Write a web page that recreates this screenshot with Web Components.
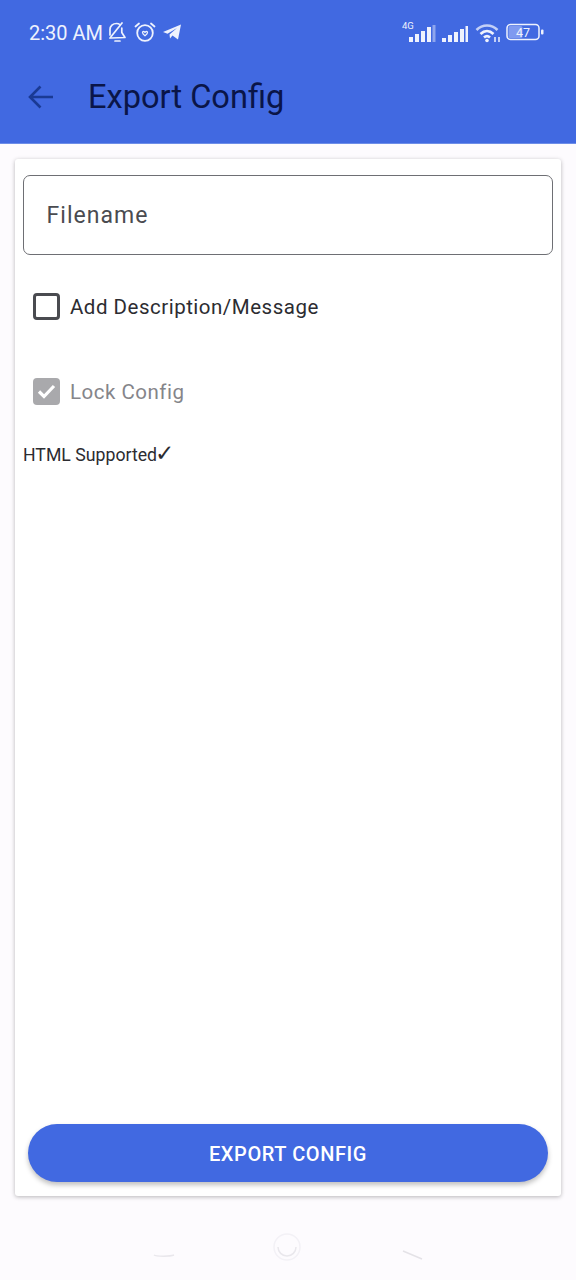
<!DOCTYPE html>
<html>
<head>
<meta charset="utf-8">
<title>Export Config</title>
<style>
	html, body {
		margin: 0;
		height: 1280px;
		overflow: hidden;
	}
	body {
		display: flex;
		flex-direction: column;
		background: #fdfbfe;
		font-family: Roboto, "Liberation Sans", sans-serif;
	}
</style>
</head>
<body>
<app-header title-text="Export Config"></app-header>
<form-card>
	<outlined-field label="Filename"></outlined-field>
	<check-row label="Add Description/Message" style="margin-top:9px"></check-row>
	<check-row label="Lock Config" checked disabled></check-row>
	<div slot="note" style="font-size:17.7px;color:#2c2c31;height:28px;line-height:28px;margin-top:7px;white-space:nowrap;">HTML Supported<span style="font-family:'DejaVu Sans',sans-serif;font-size:23px;line-height:20px;margin-left:-2px;">✓</span></div>
	<pill-button slot="action">EXPORT CONFIG</pill-button>
</form-card>
<nav-bar></nav-bar>
<script>
class AppHeader extends HTMLElement {
	connectedCallback() {
		let shadow = this.attachShadow({mode: "open"});
		shadow.innerHTML = `
			<style>
				:host {
					display: block;
					background: #4169e1;
					border-bottom: 1px solid #6d8de8;
					height: 143px;
					box-sizing: content-box;
				}
				#status {
					height: 64px;
					display: flex;
					align-items: center;
					justify-content: space-between;
					padding: 0 32px 0 29px;
					color: #eef2fd;
				}
				#left, #right {
					display: flex;
					align-items: center;
				}
				#time {
					font-size: 20px;
					margin-right: 3px;
					padding-top: 1px;
				}
				#toolbar {
					height: 66px;
					display: flex;
					align-items: center;
					padding-left: 28px;
				}
				h1 {
					margin: 0 0 0 34px;
					font-weight: 400;
					font-size: 32.6px;
					color: #0a1548;
				}
				svg {
					display: block;
				}
			</style>
			<div id="status">
				<div id="left">
					<span id="time">2:30 AM</span>
					<svg width="22" height="22" viewBox="0 0 22 22" fill="none" stroke="#eef2fd" stroke-width="1.7" stroke-linecap="round" stroke-linejoin="round">
						<path d="M4 14V8.500C4 5 7 2.500 10.500 2.500C12 2.500 13.200 3 14.200 3.800M15.800 7V11.500L19 16.500L5 17"/>
						<path d="M9 20H14"/>
						<path d="M4 17L16 2"/>
					</svg>
					<svg style="margin-left:6px" width="22" height="22" viewBox="0 0 22 22" fill="none" stroke="#eef2fd" stroke-width="1.8" stroke-linecap="round" stroke-linejoin="round">
						<circle cx="11" cy="12" r="7.800"/>
						<path d="M1.500 5.500L5 2.500M20.500 5.500L17 2.500"/>
						<path d="M8.500 11.500C8.500 10 10.500 10 11 11.500C11.500 10 13.500 10 13.500 11.500C13.500 12.800 12 14 11 14.800C10 14 8.500 12.800 8.500 11.500Z" stroke-width="1.300"/>
					</svg>
					<svg style="margin-left:6px" width="20" height="18" viewBox="0 0 20 18">
						<path d="M1 9L19 1.500L16 16.500L10.500 12.500L8 15.500L7.500 11.500L15 5L5.500 10.800Z" fill="#eef2fd"/>
					</svg>
				</div>
				<div id="right">
					<svg width="34" height="24" viewBox="0 0 34 24" fill="#eef2fd">
						<text x="0" y="9" font-family="Roboto, sans-serif" font-size="9.500">4G</text>
						<rect x="7" y="17" width="4" height="5"/>
						<rect x="13" y="14" width="4" height="8"/>
						<rect x="19" y="11" width="4" height="11"/>
						<rect x="25" y="7" width="4" height="15"/>
						<rect x="30.500" y="5" width="3" height="17" opacity=".45"/>
					</svg>
					<svg style="margin-left:5px" width="27" height="24" viewBox="0 0 27 24" fill="#eef2fd">
						<rect x="1" y="18" width="4" height="4"/>
						<rect x="7" y="15" width="4" height="7"/>
						<rect x="13" y="12" width="4" height="10"/>
						<rect x="19" y="9" width="4" height="13"/>
						<rect x="24.500" y="6" width="2.500" height="16"/>
					</svg>
					<svg style="margin-left:7px" width="26" height="24" viewBox="0 0 26 24" fill="none" stroke="#eef2fd" stroke-width="2.600">
						<path d="M1.500 10C7.500 4 16.500 4 22.500 10" opacity=".75"/>
						<path d="M5.500 14C9.500 10 14.500 10 18.500 14"/>
						<path d="M9 17.500C10.800 15.800 13.200 15.800 15 17.500"/>
						<circle cx="12" cy="20.500" r="1.800" fill="#eef2fd" stroke="none"/>
						<path d="M20 22V17M24 22V17" stroke-width="1.500"/>
					</svg>
					<svg style="margin-left:5px" width="38" height="18" viewBox="0 0 38 18">
						<rect x="1" y="1.500" width="32" height="15" rx="3.500" fill="none" stroke="#eef2fd" stroke-width="1.500"/>
						<rect x="2.500" y="3" width="14" height="12" rx="1.500" fill="#7f9af0"/>
						<text x="17" y="13.500" text-anchor="middle" font-family="Roboto, sans-serif" font-size="12.500" fill="#eef2fd">47</text>
						<rect x="35" y="6.500" width="2.500" height="5" rx="1" fill="#eef2fd"/>
					</svg>
				</div>
			</div>
			<div id="toolbar">
				<svg width="26" height="26" viewBox="0 0 26 26" fill="none" stroke="#1a3a94" stroke-width="2.600">
					<path d="M25 13H2.500M12.500 2.500L2 13L12.500 23.500"/>
				</svg>
				<h1></h1>
			</div>
		`;
		shadow.querySelector("h1").textContent = this.getAttribute("title-text");
	}
}
customElements.define("app-header", AppHeader);

class FormCard extends HTMLElement {
	connectedCallback() {
		let shadow = this.attachShadow({mode: "open"});
		shadow.innerHTML = `
			<style>
				:host {
					display: flex;
					flex-direction: column;
					box-sizing: border-box;
					height: 1037px;
					margin: 15px 15px 0 15px;
					padding: 16px 8px 14px 8px;
					background: #fff;
					border-radius: 3px;
					box-shadow: 0 1px 4px rgba(0, 0, 0, 0.28);
				}
				#fields {
					flex: 1;
				}
				#action {
					padding: 0 5px;
				}
			</style>
			<div id="fields">
				<slot></slot>
				<slot name="note"></slot>
			</div>
			<div id="action"><slot name="action"></slot></div>
		`;
	}
}
customElements.define("form-card", FormCard);

class OutlinedField extends HTMLElement {
	connectedCallback() {
		let shadow = this.attachShadow({mode: "open"});
		shadow.innerHTML = `
			<style>
				:host {
					display: flex;
					align-items: center;
					box-sizing: border-box;
					height: 80px;
					padding-left: 22.500px;
					border: 1.500px solid #6e6f74;
					border-radius: 7px;
					font-size: 23px;
					letter-spacing: 1.05px;
					color: #4a4b50;
				}
			</style>
			<span></span>
		`;
		shadow.querySelector("span").textContent = this.getAttribute("label");
	}
}
customElements.define("outlined-field", OutlinedField);

class CheckRow extends HTMLElement {
	connectedCallback() {
		let shadow = this.attachShadow({mode: "open"});
		shadow.innerHTML = `
			<style>
				:host {
					display: flex;
					align-items: center;
					height: 85px;
					padding-left: 10px;
					font-size: 20.500px;
					letter-spacing: 0.5px;
					color: #2c2c31;
				}
				:host([disabled]) {
					color: #85858a;
				}
				#box {
					box-sizing: border-box;
					width: 27px;
					height: 27px;
					margin-right: 10px;
					border: 3px solid #4a4b50;
					border-radius: 4px;
					display: flex;
					align-items: center;
					justify-content: center;
				}
				:host([checked]) #box {
					border: 0;
					background: #a9a9ac;
				}
				svg {
					display: none;
				}
				:host([checked]) svg {
					display: block;
				}
			</style>
			<div id="box">
				<svg width="19" height="15" viewBox="0 0 19 15" fill="none" stroke="#fff" stroke-width="3.200">
					<path d="M2 7.500L7 12.500L17 2"/>
				</svg>
			</div>
			<span></span>
		`;
		shadow.querySelector("span").textContent = this.getAttribute("label");
	}
}
customElements.define("check-row", CheckRow);

class PillButton extends HTMLElement {
	connectedCallback() {
		let shadow = this.attachShadow({mode: "open"});
		shadow.innerHTML = `
			<style>
				:host {
					display: flex;
					align-items: center;
					justify-content: center;
					height: 58px;
					padding-top: 1px;
					box-sizing: border-box;
					border-radius: 29px;
					background: #4169e1;
					color: #fff;
					font-size: 20px;
					font-weight: 500;
					letter-spacing: 0.6px;
					box-shadow: 0 3px 5px rgba(0, 0, 0, 0.25);
				}
			</style>
			<slot></slot>
		`;
	}
}
customElements.define("pill-button", PillButton);

class NavBar extends HTMLElement {
	connectedCallback() {
		let shadow = this.attachShadow({mode: "open"});
		shadow.innerHTML = `
			<style>
				:host {
					display: flex;
					flex: 1;
					align-items: flex-start;
					justify-content: center;
					padding-top: 36px;
				}
				svg {
					display: block;
				}
			</style>
			<svg width="290" height="32" viewBox="0 0 290 32" fill="none" stroke="#efedf2" stroke-width="1.500">
				<path d="M11 23C13 24.500 27 24.500 31 23" stroke="#e9e7ec"/>
				<circle cx="144" cy="15" r="13" stroke="#f3f1f6"/>
				<path d="M135 15A9 9 0 0 0 153 15" stroke="#e9e7ec"/>
				<path d="M260 19L279 27" stroke="#e4e2e7"/>
			</svg>
		`;
	}
}
customElements.define("nav-bar", NavBar);
</script>
</body>
</html>
